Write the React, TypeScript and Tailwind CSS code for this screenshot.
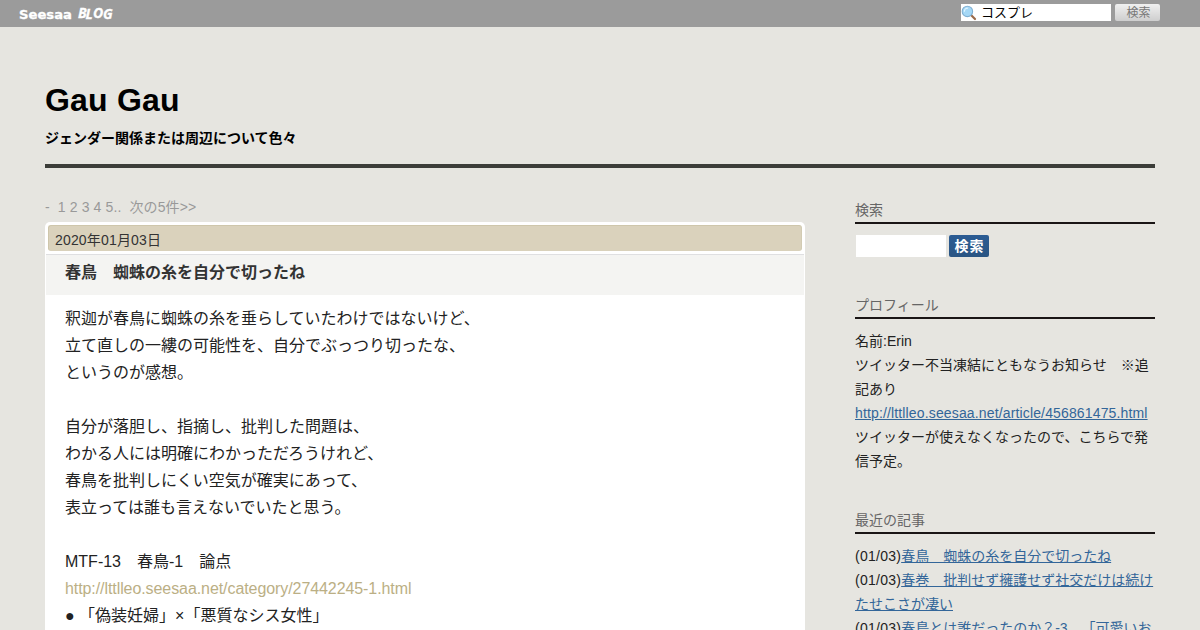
import type { ReactNode } from 'react';

const pages = ['1', '2', '3', '4'];

const articleLines = [
  '釈迦が春鳥に蜘蛛の糸を垂らしていたわけではないけど、',
  '立て直しの一縷の可能性を、自分でぶっつり切ったな、',
  'というのが感想。',
  '',
  '自分が落胆し、指摘し、批判した問題は、',
  'わかる人には明確にわかっただろうけれど、',
  '春鳥を批判しにくい空気が確実にあって、',
  '表立っては誰も言えないでいたと思う。',
  '',
  'MTF-13　春鳥-1　論点',
];

const recentArticles = [
  { date: '01/03', title: '春鳥　蜘蛛の糸を自分で切ったね' },
  { date: '01/03', title: '春巻　批判せず擁護せず社交だけは続けたせこさが凄い' },
  { date: '01/03', title: '春鳥とは誰だったのか？-3　「可愛いお' },
];

function SearchIcon() {
  return (
    <svg className="h-4 w-4 shrink-0" viewBox="0 0 16 16" fill="none">
      <path d="M10 10L14 14" stroke="#9a6a48" strokeWidth="2.2" strokeLinecap="round" />
      <circle cx="6.4" cy="6.4" r="5.2" fill="#a5d8f6" stroke="#7fb0d3" strokeWidth="1.1" />
      <path d="M3.4 6.2a3 3 0 0 1 3-3" stroke="#e2f5ff" strokeWidth="1.2" strokeLinecap="round" />
    </svg>
  );
}

function TopBar() {
  return (
    <header className="flex h-[27px] items-start justify-between bg-[#9b9b9b] pr-10 pl-[18px]">
      <svg className="h-[27px] w-[100px]" viewBox="0 0 100 27" fill="#fff" aria-label="Seesaa BLOG">
        <text x="1" y="18.6" textLength="53" lengthAdjust="spacingAndGlyphs" stroke="#fff" strokeWidth="0.3" className="font-['DejaVu_Sans'] text-[13px] font-bold">
          Seesaa
        </text>
        {/* the letters of BLOG sit alternately above and below the line */}
        <text x="60 67.5 75 85" y="17.6 19 17.6 19" stroke="#fff" strokeWidth="0.3" className="font-['Open_Sans'] text-[14px] font-bold italic">
          BLOG
        </text>
      </svg>
      <form className="flex gap-1 pt-1">
        <div className="flex h-[17px] w-[150px] items-center gap-1 bg-white">
          <SearchIcon />
          <input defaultValue="コスプレ" className="w-[125px] text-[13px] leading-[17px] text-black outline-none" />
        </div>
        <button
          type="button"
          className="h-[17px] w-[45px] rounded-[2px] bg-linear-to-b from-[#f0f0f0] to-[#cecece] pt-px pl-0.5 text-xs leading-[17px] text-[#777]"
        >
          検索
        </button>
      </form>
    </header>
  );
}

function SideSection({ title, children }: { title: string; children: ReactNode }) {
  return (
    <section>
      <h2 className="h-6 border-b-2 border-[#1a1515] text-sm leading-[21px] text-[#666]">{title}</h2>
      <div className="pt-[10px] text-sm leading-6 text-[#222]">{children}</div>
    </section>
  );
}

function Sidebar() {
  return (
    <aside className="flex w-[300px] flex-col gap-[37px]">
      <SideSection title="検索">
        <form className="flex h-[24px] items-center gap-[3px] pl-px">
          <input className="h-[22px] w-[90px] bg-white outline-none" aria-label="検索" />
          <button
            type="button"
            className="h-[22px] w-10 rounded-[2px] bg-linear-to-b from-[#2c5c94] to-[#2a5583] pl-px text-[14px] leading-[21px] font-bold tracking-[1px] text-white"
          >
            検索
          </button>
        </form>
      </SideSection>
      <SideSection title="プロフィール">
        名前:Erin
        <br />
        ツイッター不当凍結にともなうお知らせ　※追記あり
        <br />
        <a href="#" className="tracking-[0.145px] text-[#336699] underline">http://lttlleo.seesaa.net/article/456861475.html</a>
        <br />
        ツイッターが使えなくなったので、こちらで発信予定。
      </SideSection>
      <SideSection title="最近の記事">
        {recentArticles.map((article) => (
          <div key={article.title}>
            <span className="tracking-[0.25px]">({article.date})</span>
            <a href="#" className="text-[#336699] underline">{article.title}</a>
          </div>
        ))}
      </SideSection>
    </aside>
  );
}

function Article() {
  return (
    <article className="rounded-t-[5px] bg-white">
      <div className="px-[3px] pt-[3px] pb-[3px]">
        <div className="h-[26px] rounded-[3px] border border-[#cec6ab] border-r-[#d2cbb3] border-b-[#d9d1bb] bg-[#dad2bc] pl-[6px] text-sm leading-[28px] tracking-[0.17px] text-[#333]">
          2020年01月03日
        </div>
      </div>
      <h2 className="mx-px h-[41px] border-t border-[#dfdfe1] bg-[#f4f4f2] pl-[19px] text-base leading-[36px] font-bold text-[#333]">
        春鳥　蜘蛛の糸を自分で切ったね
      </h2>
      <div className="px-5 pt-[10px] pb-10 text-base leading-[27px] text-[#222]">
        {articleLines.map((line, index) => (
          <p key={index} className="h-[27px]">{line}</p>
        ))}
        <p className="h-[27px]">
          <a href="#" className="tracking-[-0.08px] text-[#bbaf85]">http://lttlleo.seesaa.net/category/27442245-1.html</a>
        </p>
        <p className="h-[27px]">● 「偽装妊婦」×「悪質なシス女性」</p>
      </div>
    </article>
  );
}

export default function App() {
  return (
    <div
      lang="ja"
      className="h-[630px] w-[1200px] overflow-hidden bg-[#e6e5e0] font-['Liberation_Sans','Noto_Sans_CJK_JP',sans-serif] [text-spacing-trim:space-all]"
    >
      <TopBar />
      <div className="mx-auto w-[1110px]">
        <div className="h-[141px] border-b-4 border-[#3c3d39] pt-[49px]">
          <h1 className="text-[32px] leading-[48px] font-bold tracking-[0.2px] text-black">Gau Gau</h1>
          <p className="pt-1 text-sm leading-5 font-bold text-black">ジェンダー関係または周辺について色々</p>
        </div>
        <div className="flex items-start justify-between">
          <main className="w-[760px] pt-[29px]">
            <nav className="h-[25px] text-sm leading-[21px] tracking-[0.12px] whitespace-pre text-[#999]">
              -&nbsp; {pages.map((page) => <a key={page} href="#">{page} </a>)}
              <a href="#">5</a>..&nbsp; <a href="#">次の5件&gt;&gt;</a>
            </nav>
            <Article />
          </main>
          <div className="pt-8">
            <Sidebar />
          </div>
        </div>
      </div>
    </div>
  );
}
